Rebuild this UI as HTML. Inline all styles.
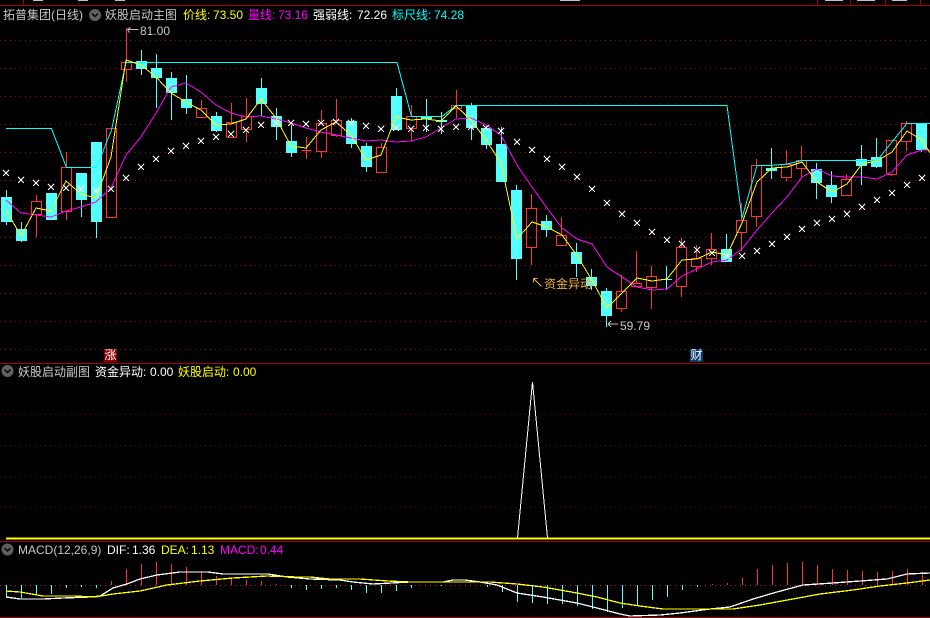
<!DOCTYPE html>
<html><head><meta charset="utf-8"><style>
html,body{margin:0;padding:0;background:#000;}
#w{position:relative;width:930px;height:618px;overflow:hidden;background:#000;font:12px/14px "Liberation Sans","WenQuanYi Zen Hei","Noto Sans CJK SC",sans-serif;}
svg{position:absolute;left:0;top:0;}
.t{position:absolute;white-space:nowrap;height:14px;}
.g{color:#c8c8c8}.y{color:#ffff00}.m{color:#ff00ff}.w{color:#fff}.c{color:#00ffff}
.tag{position:absolute;width:13px;height:13px;top:349px;color:#fff;text-align:center;line-height:13px;}
</style></head><body><div id="w">
<svg width="930" height="618" viewBox="0 0 930 618">
<g stroke="#b00000" stroke-width="1" stroke-dasharray="1 4" fill="none" shape-rendering="crispEdges">
<path d="M0 40.5H930M0 68.5H930M0 96.5H930M0 124.5H930M0 152.5H930M0 180.5H930M0 208.5H930M0 237.5H930M0 265.5H930M0 293.5H930M0 321.5H930M0 349.5H930"/>
<path stroke="#800000" d="M0 414.5H930M0 445.5H930M0 476.5H930M0 507.5H930"/>
<path stroke="#c02020" d="M0 585.5H930"/>
</g>
<g shape-rendering="crispEdges" fill="none">
<path stroke="#a80000" d="M0 5.5H930M0 363.5H930M0 541.5H930M0 617.5H930M23.5 0V5M817.5 0V5M850.5 0V5M885.5 0V5M920.5 0V5"/>
<path stroke="#c0c0c0" d="M33 .5h10M78 .5h10M115 .5h10M560 .5h20M825 .5h18M857 .5h18M892 .5h15"/>
<path stroke="#ffff00" stroke-width="2" d="M6 538.5H930"/>
</g>
<g shape-rendering="crispEdges">
<path fill="#54ffff" d="M1 197h11v25H1zM16 229h11v12H16zM46 193h11v27H46zM76 173h11v27H76zM91 142h11v80H91zM136 61h11v8h-11zM151 68h11v10h-11zM166 78h11v15h-11zM181 99h11v9h-11zM211 116h11v15h-11zM256 88h11v16h-11zM271 116h11v11h-11zM286 141h11v12h-11zM346 121h11v23h-11zM361 146h11v21h-11zM391 96h11v34h-11zM421 116h11v3h-11zM436 120h11v2h-11zM466 106h11v22h-11zM481 128h11v17h-11zM496 144h11v38h-11zM511 190h11v69h-11zM541 221h11v9h-11zM571 252h11v12h-11zM586 277h11v9h-11zM601 291h11v25h-11zM721 249h11v13h-11zM766 168h11v3h-11zM811 169h11v14h-11zM826 185h11v12h-11zM856 159h11v7h-11zM871 157h11v10h-11zM916 124h11v26h-11z"/>
<path fill="none" stroke="#54ffff" d="M6.5 190V225M21.5 222V242M81.5 200V217M96.5 222V238M141.5 50V75M156.5 54V108M171.5 72V120M186.5 75V114M216.5 112V132M261.5 78V116M276.5 108V140M291.5 125V157M351.5 118V148M366.5 143V172M396.5 88V96M426.5 99V132M441.5 112V134M471.5 103V140M486.5 125V149M501.5 127V144M516.5 185V280M546.5 215V237M576.5 243V277M591.5 269V290M606.5 288V327M666.5 266V290M661 279.5h11M726.5 234V249M771.5 148V179M816.5 163V199M831.5 171V203M861.5 145V185M876.5 138V168M921.5 124V152"/>
<path fill="none" stroke="#ff3232" d="M36.5 195V201M36.5 214V237M31.5 201.5h10v13h-10zM66.5 152V167M66.5 211V220M61.5 167.5h10v44h-10zM106.5 128.5h10v89h-10zM126.5 28V62M126.5 69V82M121.5 62.5h10v7h-10zM201.5 100V108M196.5 108.5h10v9h-10zM231.5 103V122M226.5 122.5h10v15h-10zM246.5 98V116M246.5 129V142M241.5 116.5h10v13h-10zM306.5 137V159M301.5 150.5h10M321.5 110V123M321.5 151V158M316.5 123.5h10v28h-10zM336.5 99V120M336.5 135V137M331.5 120.5h10v15h-10zM381.5 143V147M381.5 172V173M376.5 147.5h10v25h-10zM411.5 105V116M411.5 128V141M406.5 116.5h10v12h-10zM456.5 90V105M456.5 108V118M451.5 105.5h10v3h-10zM531.5 194V208M531.5 247V265M526.5 208.5h10v39h-10zM561.5 217V235M556.5 235.5h10v10h-10zM621.5 275V291M621.5 308V312M616.5 291.5h10v17h-10zM636.5 251V283M631.5 283.5h10v3h-10zM651.5 266V276M651.5 287V309M646.5 276.5h10v11h-10zM681.5 238V247M681.5 286V297M676.5 247.5h10v39h-10zM696.5 245V258M696.5 266V272M691.5 258.5h10v8h-10zM711.5 233V249M711.5 258V265M706.5 249.5h10v9h-10zM741.5 203V220M741.5 232V251M736.5 220.5h10v12h-10zM756.5 159V165M756.5 216V227M751.5 165.5h10v51h-10zM786.5 150V164M786.5 177V181M781.5 164.5h10v13h-10zM801.5 146V160M801.5 168V177M796.5 160.5h10v8h-10zM846.5 174V179M841.5 179.5h10v16h-10zM891.5 174V176M886.5 140.5h10v34h-10zM906.5 121V123M906.5 141V151M901.5 123.5h10v18h-10z"/>
</g>
<g fill="none" stroke-width="1" shape-rendering="crispEdges">
<path stroke="#00ffff" d="M6 128.5H51.5L66.5 167.5H96.5L111.5 130 126 62.5H397L411.5 116.5H442L456 105.5H727L742 218 757 165.5 771 165.5 787 164 802 160.5H877L907 123.5H930"/>
<path stroke="#ff00ff" d="M6 200L21 213 36 215 51 217 66 211 81 207 96 202 111 188 126 155 141 137 156 113 171 87 186 83 201 92 216 105 231 113 246 117 261 116 276 119 291 123 306 128 321 132 336 135 351 138 366 141 381 140 396 142 411 141 426 137 441 128 456 119 471 118 486 125 501 135 517 165 532 187 547 208 562 228 577 239 592 244 607 267 622 277 637 287 652 290 667 289 682 276 697 269 712 262 727 260 742 249 757 230 772 213 787 197 802 177 817 169 832 176 847 177 862 177 877 179 892 172 907 155 922 150 930 150"/>
<path stroke="#ffff00" d="M6 210L21 236 36 208 51 211 66 181 81 194 96 198 111 157 126 60 141 65 156 77 171 93 186 102 201 110 216 125 231 124 246 119 261 99 276 118 291 146 306 148 321 130 336 122 351 135 366 160 381 155 396 117 411 120 426 119 441 121 456 106 471 120 486 140 501 163 517 239 532 222 547 227 562 235 578 257 593 282 607 308 622 293 637 278 652 281 667 279 682 260 697 259 712 252 727 255 742 223 757 182 772 168 787 167 802 162 817 182 832 192 847 184 862 164 877 161 892 152 907 131 922 140 930 153"/>
<path stroke="#fff" d="M3 170l6 6m0-6l-6 6M18 177l6 6m0-6l-6 6M33 180l6 6m0-6l-6 6M48 184l6 6m0-6l-6 6M63 185l6 6m0-6l-6 6M78 186l6 6m0-6l-6 6M93 188l6 6m0-6l-6 6M108 186l6 6m0-6l-6 6M123 175l6 6m0-6l-6 6M138 164l6 6m0-6l-6 6M153 156l6 6m0-6l-6 6M168 148l6 6m0-6l-6 6M183 143l6 6m0-6l-6 6M198 138l6 6m0-6l-6 6M213 134l6 6m0-6l-6 6M228 131l6 6m0-6l-6 6M243 127l6 6m0-6l-6 6M258 122l6 6m0-6l-6 6M273 120l6 6m0-6l-6 6M288 120l6 6m0-6l-6 6M303 121l6 6m0-6l-6 6M318 120l6 6m0-6l-6 6M333 119l6 6m0-6l-6 6M348 120l6 6m0-6l-6 6M363 123l6 6m0-6l-6 6M378 126l6 6m0-6l-6 6M393 125l6 6m0-6l-6 6M408 126l6 6m0-6l-6 6M423 125l6 6m0-6l-6 6M438 126l6 6m0-6l-6 6M453 124l6 6m0-6l-6 6M468 124l6 6m0-6l-6 6M483 125l6 6m0-6l-6 6M498 128l6 6m0-6l-6 6M514 139l6 6m0-6l-6 6M529 147l6 6m0-6l-6 6M544 156l6 6m0-6l-6 6M559 164l6 6m0-6l-6 6M574 174l6 6m0-6l-6 6M589 186l6 6m0-6l-6 6M604 200l6 6m0-6l-6 6M619 211l6 6m0-6l-6 6M634 220l6 6m0-6l-6 6M649 229l6 6m0-6l-6 6M664 237l6 6m0-6l-6 6M679 241l6 6m0-6l-6 6M694 247l6 6m0-6l-6 6M709 250l6 6m0-6l-6 6M724 253l6 6m0-6l-6 6M739 253l6 6m0-6l-6 6M754 248l6 6m0-6l-6 6M769 241l6 6m0-6l-6 6M784 234l6 6m0-6l-6 6M799 226l6 6m0-6l-6 6M814 220l6 6m0-6l-6 6M829 216l6 6m0-6l-6 6M844 211l6 6m0-6l-6 6M859 204l6 6m0-6l-6 6M874 197l6 6m0-6l-6 6M889 190l6 6m0-6l-6 6M904 182l6 6m0-6l-6 6M919 175l6 6m0-6l-6 6"/>
<path stroke="#c0c0c0" d="M127.5 29.5l3-2m-3 2l2 3m-2-3h11M608 324l3-3m-3 3l3 3m-3-3h10"/>
<path stroke="#f0b040" d="M533.5 278.5l8 8m-8-8v4m0-4h4"/>
<path stroke="#fff" d="M517.5 538L532.5 382 547.5 538"/>
</g>
<g shape-rendering="crispEdges" fill="none">
<path stroke="#54ffff" d="M6.5 585V597M21.5 585V598M36.5 585V595M51.5 585V594M66.5 585V588M81.5 585V587M96.5 585V588M291.5 585V588M306.5 585V590M321.5 585V589M336.5 585V588M351.5 585V590M366.5 585V593M381.5 585V593M396.5 585V591M411.5 585V588M441.5 585V586M487.5 585V587M502.5 585V592M517.5 585V602M532.5 585V603M547.5 585V604M562.5 585V604M577.5 585V606M592.5 585V609M607.5 585V612M622.5 585V608M637.5 585V605M652.5 585V600M667.5 585V597M682.5 585V590M697.5 585V587"/>
<path stroke="#ff3232" d="M111.5 581V585M126.5 569V585M141.5 564V585M156.5 562V585M171.5 564V585M186.5 567V585M201.5 571V585M216.5 576V585M231.5 579V585M246.5 580V585M261.5 581V585M276.5 584V585M712.5 584V585M727.5 583V585M742.5 578V585M757.5 569V585M772.5 565V585M787.5 563V585M802.5 562V585M817.5 565V585M832.5 569V585M847.5 570V585M862.5 571V585M877.5 572V585M892.5 571V585M907.5 569V585M922.5 572V585"/>
</g>
<g fill="none" stroke-width="1.3" shape-rendering="crispEdges">
<path stroke="#fff" d="M6 597L20 599H43L63 598 90 597 100 596 113 588 127 584 140 579 157 575 180 572H208L223 574H268L287 577 310 579 340 580 353 582 373 584 410 582H443L453 580H465L480 582 497 585 517 593 543 597 577 603 597 608 620 614 630 616 660 615 680 613 710 609 730 607 753 599 777 592 803 585 833 583 860 581 887 579 907 574 930 573"/>
<path stroke="#ffff00" d="M6 591L20 592 43 596 73 596 95 597 113 594 140 591 167 585 200 581 233 578 267 576 297 577 310 577 330 579 360 579 388 581 410 582H490L517 584 543 587 577 593 597 597 620 603 640 606 663 609H733L760 605 793 599 820 594 853 590 880 586 907 583 930 580"/>
</g>
<g>
<circle cx="95" cy="15" r="6" fill="#606060"/><path d="M92 13.5l3 3 3-3" stroke="#000" stroke-width="1.4" fill="none"/>
<circle cx="7.5" cy="371" r="6" fill="#606060"/><path d="M4.5 369.5l3 3 3-3" stroke="#000" stroke-width="1.4" fill="none"/>
<circle cx="7.5" cy="549.5" r="6" fill="#606060"/><path d="M4.5 548l3 3 3-3" stroke="#000" stroke-width="1.4" fill="none"/>
</g>
</svg>
<div class="t g" style="left:3px;top:8px">拓普集团(日线)</div>
<div class="t g" style="left:105px;top:8px">妖股启动主图</div>
<div class="t y" style="left:183px;top:8px">价线:</div><div class="t y" style="left:213px;top:8px">73.50</div>
<div class="t m" style="left:248px;top:8px">量线:</div><div class="t m" style="left:278px;top:8px">73.16</div>
<div class="t w" style="left:313px;top:8px">强弱线:</div><div class="t w" style="left:357px;top:8px">72.26</div>
<div class="t c" style="left:392px;top:8px">标尺线:</div><div class="t c" style="left:434px;top:8px">74.28</div>
<div class="t g" style="left:140px;top:24px">81.00</div>
<div class="t g" style="left:620px;top:319px">59.79</div>
<div class="t" style="left:544px;top:277px;color:#f0b040">资金异动</div>
<div class="tag" style="left:104px;background:#8c0000">涨</div>
<div class="tag" style="left:690px;background:#0a3a6e">财</div>
<div class="t g" style="left:18px;top:365px">妖股启动副图</div>
<div class="t w" style="left:95px;top:365px">资金异动:</div><div class="t w" style="left:150px;top:365px">0.00</div>
<div class="t y" style="left:178px;top:365px">妖股启动:</div><div class="t y" style="left:233px;top:365px">0.00</div>
<div class="t g" style="left:18px;top:543px">MACD(12,26,9)</div>
<div class="t w" style="left:107px;top:543px">DIF:</div><div class="t w" style="left:132px;top:543px">1.36</div>
<div class="t y" style="left:161px;top:543px">DEA:</div><div class="t y" style="left:191px;top:543px">1.13</div>
<div class="t m" style="left:220px;top:543px">MACD:</div><div class="t m" style="left:260px;top:543px">0.44</div>
</div></body></html>
